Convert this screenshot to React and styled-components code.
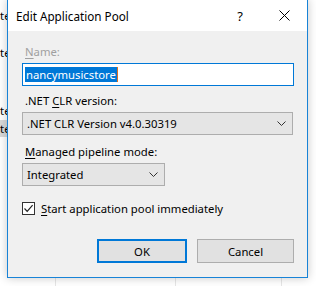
import * as React from 'react';
import styled, { createGlobalStyle } from 'styled-components';

const GlobalStyle = createGlobalStyle`
  html, body {
    margin: 0;
    padding: 0;
    background: #ffffff;
  }
  body {
    font-family: 'Noto Sans', 'Open Sans', sans-serif;
    font-size: 11.3px;
    color: #000;
  }
`;

const backRows = [
  { h: 18, text: 'Sites' },
  { h: 19, text: '' },
  { h: 18, text: 'Sites' },
  { h: 40, text: '' },
  { h: 18, text: 'Sites' },
  { h: 17, text: 'Sites', selected: true },
];

function App() {
  return (
    <>
      <GlobalStyle />
      <Desktop>
        <BackList>
          {backRows.map((r, i) => (
            <BackRow key={i} $h={r.h} $selected={r.selected}>
              {r.text}
            </BackRow>
          ))}
        </BackList>
        <BackGrid>
          <GridLine />
          <GridLine />
          <GridLine />
        </BackGrid>

        <Dialog>
          <TitleBar>
            <Title>Edit Application Pool</Title>
            <HelpButton>?</HelpButton>
            <CloseButton>
              <svg width="11" height="11" viewBox="0 0 11 11">
                <path d="M0.5 0.5 L10.5 10.5 M10.5 0.5 L0.5 10.5" stroke="#000" strokeWidth="1" fill="none" />
              </svg>
            </CloseButton>
          </TitleBar>

          <Body>
            <Label $disabled>
              <u>N</u>ame:
            </Label>
            <TextBox>
              <Selection>nancymusicstore</Selection>
              <Caret />
            </TextBox>

            <Label $top={7}>
              .NET <u>C</u>LR version:
            </Label>
            <Combo $width={271}>
              <span>.NET CLR Version v4.0.30319</span>
              <Chevron />
            </Combo>

            <Label $top={9}>
              <u>M</u>anaged pipeline mode:
            </Label>
            <Combo $width={143}>
              <span>Integrated</span>
              <Chevron />
            </Combo>

            <CheckRow>
              <CheckBox>
                <svg width="11" height="11" viewBox="0 0 11 11">
                  <path d="M1.5 5.5 L4.2 8.3 L9.6 2.2" stroke="#222" strokeWidth="1.2" fill="none" />
                </svg>
              </CheckBox>
              <span>
                <u>S</u>tart application pool immediately
              </span>
            </CheckRow>

            <Footer>
              <Button $primary $width={90}>OK</Button>
              <Button $width={97}>Cancel</Button>
            </Footer>
          </Body>
        </Dialog>
      </Desktop>
    </>
  );
}

function Chevron() {
  return (
    <ChevronIcon width="9" height="5" viewBox="0 0 9 5">
      <path d="M0.5 0.5 L4.5 4.5 L8.5 0.5" stroke="#333" strokeWidth="1" fill="none" />
    </ChevronIcon>
  );
}

const Desktop = styled.div`
  position: relative;
  width: 316px;
  height: 286px;
  overflow: hidden;
  background: #ffffff;
`;

const BackList = styled.div`
  display: flex;
  flex-direction: column;
  padding-top: 7px;
  width: 40px;
  overflow: hidden;
`;

const BackRow = styled.div`
  height: ${p => p.$h}px;
  line-height: ${p => p.$h}px;
  white-space: nowrap;
  text-indent: -9px;
  font-size: 11.3px;
  background: ${p => (p.$selected ? '#d9d9d9' : 'transparent')};
`;

const BackGrid = styled.div`
  position: absolute;
  left: 0;
  right: 0;
  bottom: 0;
  height: 10px;
  display: flex;
  padding-left: 55px;
  gap: 119px;
  & > div:last-child {
    margin-left: -14px;
  }
`;

const GridLine = styled.div`
  width: 1px;
  height: 100%;
  background: #e6e6e6;
`;

const Dialog = styled.div`
  position: absolute;
  left: 7px;
  top: -1px;
  width: 301px;
  height: 279px;
  box-sizing: border-box;
  border: 1px solid #1883d7;
  background: #f0f0f0;
  box-shadow: 0 0 9px rgba(0, 0, 0, 0.22);
  display: flex;
  flex-direction: column;
`;

const TitleBar = styled.div`
  height: 31px;
  background: #ffffff;
  display: flex;
  align-items: center;
  padding-left: 8px;
  flex-shrink: 0;
`;

const Title = styled.div`
  flex: 1;
  font-size: 11.7px;
  color: #000;
  margin-top: 1px;
`;

const HelpButton = styled.div`
  width: 42px;
  text-align: center;
  font-size: 13px;
`;

const CloseButton = styled.div`
  width: 46px;
  display: flex;
  justify-content: center;
`;

const Body = styled.div`
  flex: 1;
  display: flex;
  flex-direction: column;
  padding: 13px 13px 0 14px;
`;

const Label = styled.div`
  height: 16px;
  line-height: 16px;
  margin-top: ${p => p.$top || 0}px;
  margin-bottom: 3px;
  color: ${p => (p.$disabled ? '#a0a0a0' : '#000')};
  padding-left: 3px;
  u {
    text-decoration-thickness: 1px;
    text-underline-offset: 2px;
  }
`;

const TextBox = styled.div`
  height: 23px;
  box-sizing: border-box;
  border: 1px solid #0078d7;
  background: #ffffff;
  display: flex;
  align-items: center;
  padding-left: 2px;
`;

const Selection = styled.span`
  background: #0078d7;
  color: #ffffff;
  height: 15px;
  line-height: 15px;
  padding: 0 1px;
`;

const Caret = styled.span`
  width: 1px;
  height: 15px;
  background: #e07020;
`;

const Combo = styled.div`
  width: ${p => p.$width}px;
  height: 23px;
  box-sizing: border-box;
  border: 1px solid #adadad;
  background: #e5e5e5;
  display: flex;
  align-items: center;
  justify-content: space-between;
  padding: 0 6px 0 4px;
`;

const ChevronIcon = styled.svg`
  display: block;
`;

const CheckRow = styled.div`
  display: flex;
  align-items: center;
  gap: 6px;
  height: 17px;
  margin-top: 14px;
  u {
    text-underline-offset: 2px;
  }
`;

const CheckBox = styled.div`
  width: 13px;
  height: 13px;
  box-sizing: border-box;
  border: 1px solid #333333;
  background: #ffffff;
  display: flex;
  align-items: center;
  justify-content: center;
`;

const Footer = styled.div`
  display: flex;
  justify-content: flex-end;
  gap: 10px;
  margin-top: 22px;
`;

const Button = styled.div`
  width: ${p => p.$width}px;
  height: 24px;
  box-sizing: border-box;
  border: ${p => (p.$primary ? '2px solid #0078d7' : '1px solid #adadad')};
  background: #e1e1e1;
  display: flex;
  align-items: center;
  justify-content: center;
`;

export default App;
